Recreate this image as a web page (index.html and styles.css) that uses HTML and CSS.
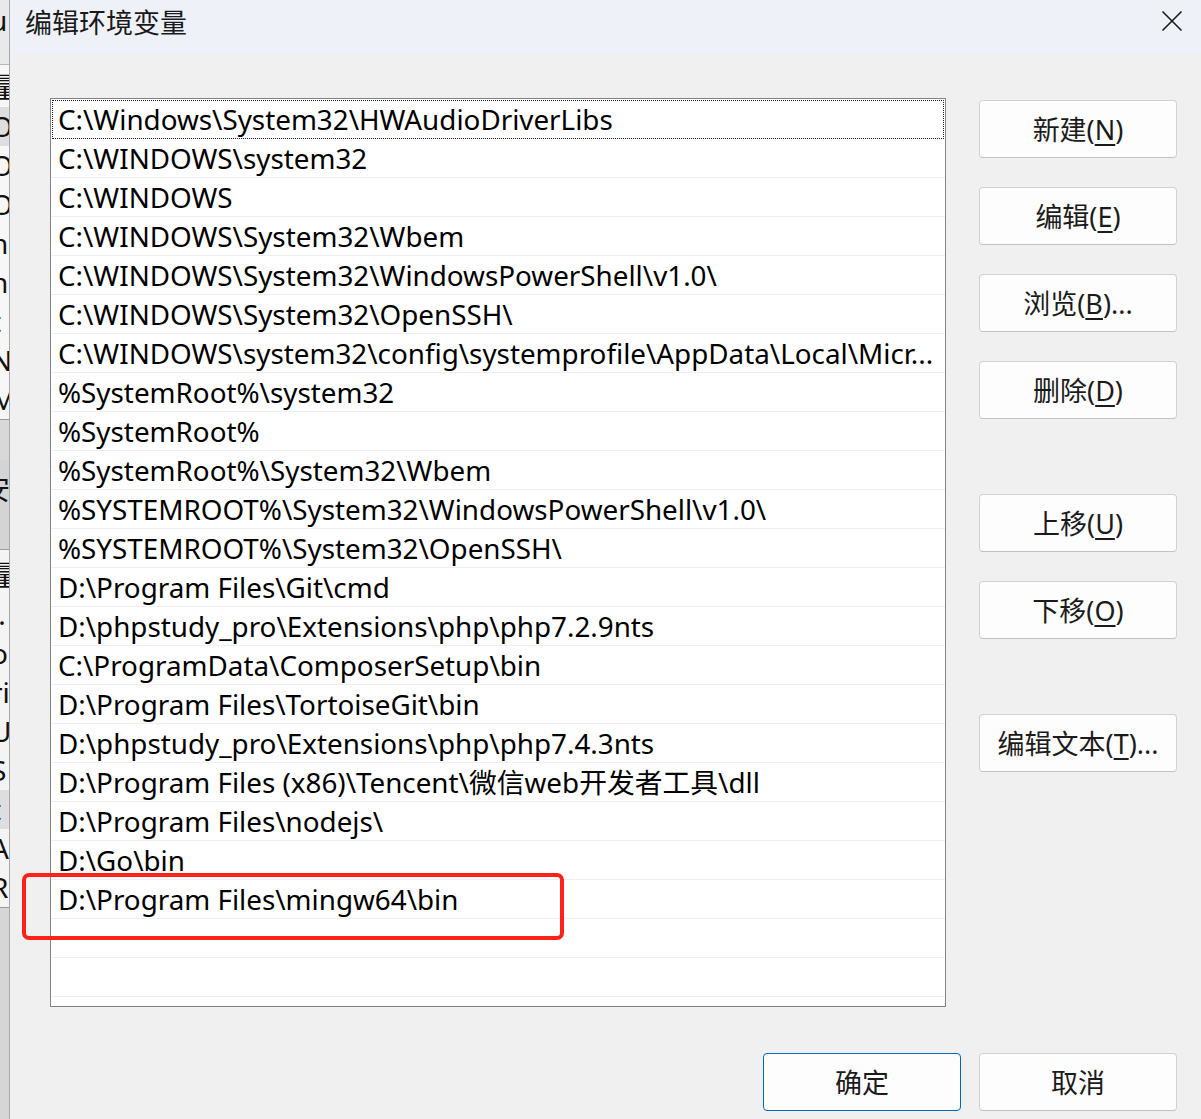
FILE: index.html
```html
<!DOCTYPE html>
<html lang="zh-CN">
<head>
<meta charset="utf-8">
<title>编辑环境变量</title>
<link rel="stylesheet" href="styles.css">
</head>
<body>
<div class="screen">
  <div class="bgwin">
    <div class="bg-top"><span class="bl bl-u">u</span></div>
    <div class="bg-rows">
      <span class="bl">量</span>
      <span class="bl sel">O</span>
      <span class="bl">O</span>
      <span class="bl">O</span>
      <span class="bl">n</span>
      <span class="bl">n</span>
      <span class="bl">t</span>
      <span class="bl">N</span>
      <span class="bl">M</span>
    </div>
    <div class="bg-gap"></div>
    <div class="bg-mid"><span class="bl">安</span></div>
    <div class="bg-rows2">
      <span class="bl">量</span>
      <span class="bl">l.</span>
      <span class="bl">o</span>
      <span class="bl">ri</span>
      <span class="bl">U</span>
      <span class="bl">S</span>
      <span class="bl sel">t</span>
      <span class="bl">A</span>
      <span class="bl">R</span>
    </div>
    <div class="bg-bottom"></div>
  </div>
  <div class="dialog">
    <div class="titlebar">
      <span class="title">编辑环境变量</span>
      <span class="close">
        <svg width="22" height="22" viewBox="0 0 22 22"><path d="M1.5 1.5 L20.5 20.5 M20.5 1.5 L1.5 20.5" stroke="#1a1a1a" stroke-width="1.6" fill="none"/></svg>
      </span>
    </div>
    <div class="content">
      <div class="main">
        <div class="list">
          <div class="row focus">C:\Windows\System32\HWAudioDriverLibs</div>
          <div class="row">C:\WINDOWS\system32</div>
          <div class="row">C:\WINDOWS</div>
          <div class="row">C:\WINDOWS\System32\Wbem</div>
          <div class="row">C:\WINDOWS\System32\WindowsPowerShell\v1.0\</div>
          <div class="row">C:\WINDOWS\System32\OpenSSH\</div>
          <div class="row">C:\WINDOWS\system32\config\systemprofile\AppData\Local\Micr...</div>
          <div class="row">%SystemRoot%\system32</div>
          <div class="row">%SystemRoot%</div>
          <div class="row">%SystemRoot%\System32\Wbem</div>
          <div class="row">%SYSTEMROOT%\System32\WindowsPowerShell\v1.0\</div>
          <div class="row">%SYSTEMROOT%\System32\OpenSSH\</div>
          <div class="row">D:\Program Files\Git\cmd</div>
          <div class="row">D:\phpstudy_pro\Extensions\php\php7.2.9nts</div>
          <div class="row">C:\ProgramData\ComposerSetup\bin</div>
          <div class="row">D:\Program Files\TortoiseGit\bin</div>
          <div class="row">D:\phpstudy_pro\Extensions\php\php7.4.3nts</div>
          <div class="row">D:\Program Files (x86)\Tencent\微信web开发者工具\dll</div>
          <div class="row">D:\Program Files\nodejs\</div>
          <div class="row">D:\Go\bin</div>
          <div class="row">D:\Program Files\mingw64\bin</div>
          <div class="row"></div>
          <div class="row"></div>
        </div>
        <div class="side">
          <button class="btn">新建(<u>N</u>)</button>
          <button class="btn">编辑(<u>E</u>)</button>
          <button class="btn">浏览(<u>B</u>)...</button>
          <button class="btn">删除(<u>D</u>)</button>
          <button class="btn gap-lg">上移(<u>U</u>)</button>
          <button class="btn">下移(<u>O</u>)</button>
          <button class="btn gap-lg">编辑文本(<u>T</u>)...</button>
        </div>
      </div>
      <div class="footer">
        <button class="btn primary">确定</button>
        <button class="btn">取消</button>
      </div>
    </div>
  </div>
  <div class="highlight"></div>
</div>
</body>
</html>
```
FILE: styles.css
```css
* { box-sizing: border-box; }
html, body { margin: 0; padding: 0; }
body {
  background: #f0f0f0;
  font-family: "Noto Sans", "Noto Sans CJK SC", sans-serif;
}
.screen {
  position: relative;
  width: 1201px;
  height: 1119px;
  display: flex;
  overflow: hidden;
}

/* background window strip */
.bgwin {
  width: 9px;
  flex: none;
  display: flex;
  flex-direction: column;
  background: #f3f3f3;
  overflow: hidden;
  box-shadow: inset -2px 0 2px -1px rgba(0,0,0,0.18);
}
.bl {
  display: block;
  height: 39px;
  line-height: 39px;
  font-size: 28px;
  color: #111;
  white-space: nowrap;
  text-indent: -9px;
}
.bg-top {
  height: 65px;
  background: #e9e9e9;
  border-bottom: 1px solid #b8b8b8;
  padding-top: 1px;
}
.bg-top .bl-u { text-indent: -10px; }
.bg-rows { display: flex; flex-direction: column; padding-top: 3px; background: #f7f7f7; }
.bl.sel { background: #dedede; }
.bg-gap { height: 41px; background: #d8d8d8; border-top: 1px solid #9a9a9a; }
.bg-mid { height: 90px; background: #d4d4d4; border-bottom: 1px solid #a0a0a0; padding-top: 10px; }
.bg-mid .bl { text-indent: -18px; }
.bg-rows2 { display: flex; flex-direction: column; padding-top: 6px; background: #f4f4f4; }
.bg-bottom { flex: 1; background: #d6d6d6; border-top: 1px solid #9a9a9a; }

/* dialog */
.dialog {
  flex: 1;
  display: flex;
  flex-direction: column;
  border-left: 1px solid #a9a9a9;
  background: #f0f0f0;
}
.titlebar {
  height: 53px;
  flex: none;
  background: #eef2f8;
  display: flex;
  align-items: center;
  justify-content: space-between;
  padding: 0 18px 0 15px;
}
.title {
  font-family: "Noto Sans CJK SC", sans-serif;
  font-size: 27px;
  color: #1a1a1a;
  margin-top: -10px;
}
.close {
  display: flex;
  width: 22px;
  height: 22px;
  margin-top: -12px;
}
.content {
  flex: 1;
  padding: 45px 24px 0 40px;
  display: flex;
  flex-direction: column;
}
.main {
  display: flex;
  gap: 33px;
}
.list {
  width: 896px;
  height: 909px;
  border: 1px solid #838383;
  background: #fff;
  overflow: hidden;
}
.row {
  height: 39px;
  border-bottom: 1px solid #efefef;
  padding-left: 7px;
  font-size: 27.8px;
  line-height: 38px;
  color: #000;
  white-space: nowrap;
  overflow: hidden;
}
.row.focus {
  outline: 1px dotted #222;
  outline-offset: -1px;
  margin: 1px 1px 0;
  padding-left: 6px;
}
.side {
  width: 198px;
  display: flex;
  flex-direction: column;
  gap: 29px;
  padding-top: 2px;
}
.side .gap-lg { margin-top: 46px; }
.btn {
  width: 198px;
  height: 58px;
  flex: none;
  background: #fdfdfd;
  border: 1px solid #d2d2d2;
  border-bottom-color: #c2c2c2;
  border-radius: 4px;
  font-family: "Noto Sans", "Noto Sans CJK SC", sans-serif;
  font-size: 27px;
  color: #1b1b1b;
  padding: 0;
  line-height: 1;
}
.btn u { text-underline-offset: 4px; text-decoration-thickness: 1.5px; }
.btn.primary { border: 1px solid #0067c0; }
.footer {
  display: flex;
  justify-content: flex-end;
  gap: 18px;
  margin-top: 46px;
}

/* annotation overlay */
.highlight {
  position: absolute;
  left: 22px;
  top: 873px;
  width: 542px;
  height: 67px;
  border: 4px solid #ff2218;
  border-radius: 7px;
  pointer-events: none;
}
```
